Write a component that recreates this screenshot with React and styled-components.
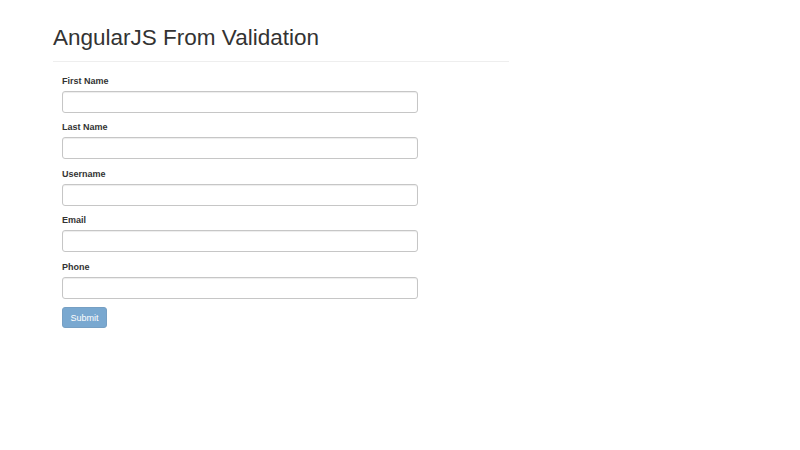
import styled, { createGlobalStyle } from 'styled-components';

const GlobalStyle = createGlobalStyle`
  * {
    box-sizing: border-box;
  }
  body {
    margin: 0;
    background: #fff;
    color: #333;
    font-family: "Liberation Sans", Arial, sans-serif;
  }
`;

const fields = ['First Name', 'Last Name', 'Username', 'Email', 'Phone'];

const App = () => (
  <>
    <GlobalStyle />
    <StyledContainer>
      <StyledHeader>
        <StyledTitle>AngularJS From Validation</StyledTitle>
      </StyledHeader>
      <StyledForm onSubmit={(e) => e.preventDefault()}>
        {fields.map((name) => (
          <FormGroup key={name}>
            <StyledLabel>{name}</StyledLabel>
            <StyledInput type='text' />
          </FormGroup>
        ))}
        <StyledButton type='submit' disabled>
          Submit
        </StyledButton>
      </StyledForm>
    </StyledContainer>
  </>
);

const StyledContainer = styled.div`
  width: 456px;
  margin-left: 53px;
  padding-top: 25.5px;
`;

const StyledHeader = styled.div`
  padding-bottom: 11px;
  margin-bottom: 12.5px;
  border-bottom: 1px solid #eee;
`;

const StyledTitle = styled.h1`
  margin: 0;
  font-size: 22.5px;
  line-height: 1.1;
  font-weight: 500;
  color: #333;
`;

const StyledForm = styled.form`
  display: flex;
  flex-direction: column;
  align-items: flex-start;
  padding-left: 9px;
`;

const FormGroup = styled.div`
  display: flex;
  flex-direction: column;
  margin-bottom: 8.5px;
`;

const StyledLabel = styled.label`
  font-size: 9px;
  line-height: 13px;
  font-weight: bold;
  margin-bottom: 3px;
`;

const StyledInput = styled.input`
  width: 356px;
  height: 22px;
  padding: 0 8px;
  font-size: 9px;
  border: 1px solid #c6c6c6;
  border-radius: 3px;
  box-shadow: inset 0 1px 1px rgba(0, 0, 0, 0.075);
  outline: none;
`;

const StyledButton = styled.button`
  height: 21px;
  padding: 0 7.5px;
  font-family: inherit;
  font-size: 9px;
  color: #fff;
  background-color: #337ab7;
  border: 1px solid #2e6da4;
  border-radius: 3px;
  opacity: 0.65;
`;

export default App;
